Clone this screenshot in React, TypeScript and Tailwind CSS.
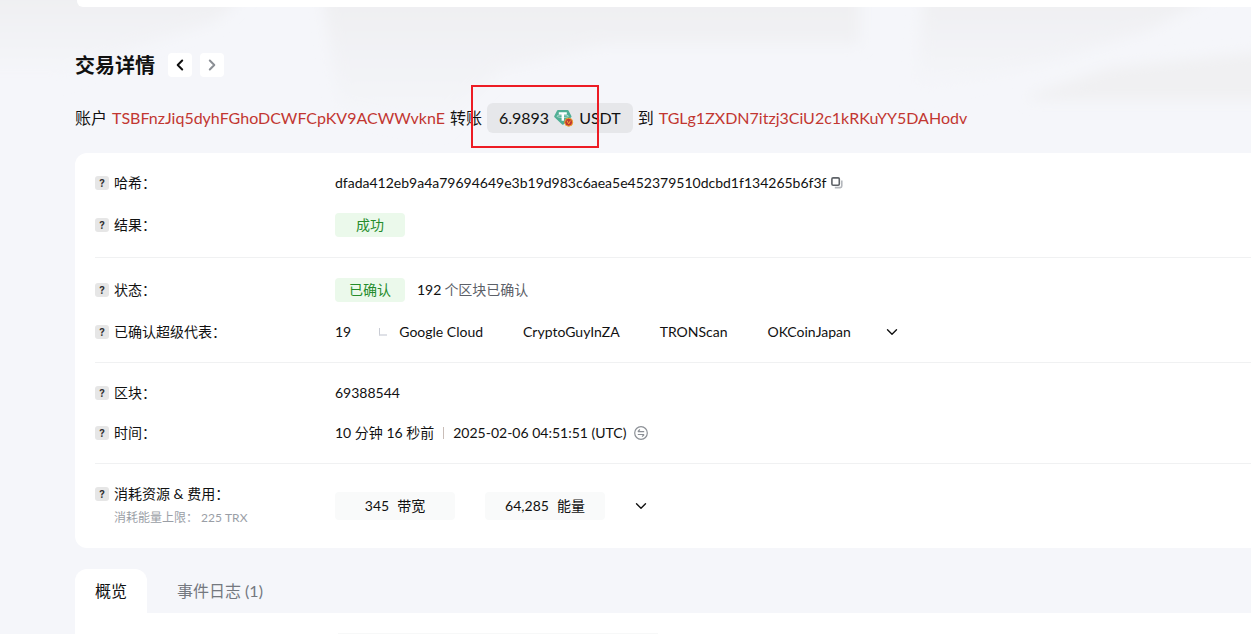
import type { ReactNode } from 'react';

const representatives = ['Google Cloud', 'CryptoGuyInZA', 'TRONScan', 'OKCoinJapan'];

function Chevron({ className = '' }: { className?: string }) {
  return (
    <svg viewBox="0 0 12 12" className={`h-3 w-3 shrink-0 fill-none stroke-current ${className}`} strokeWidth="1.4" strokeLinecap="round" strokeLinejoin="round">
      <path d="M1.5 3.8 6 8.3l4.5-4.5" />
    </svg>
  );
}

function CopyIcon() {
  return (
    <svg viewBox="0 0 12 12" className="h-3 w-3 fill-none" strokeWidth="1.6">
      <path d="M3.8 10.6h5.4a1.6 1.6 0 0 0 1.6-1.6V3.6" stroke="#b4b7bc" />
      <rect x=".9" y=".9" width="7.4" height="7.4" rx="1.2" stroke="#5f6368" />
    </svg>
  );
}

function SwapIcon() {
  return (
    <svg viewBox="0 0 14 14" className="h-3.5 w-3.5 fill-none" stroke="#8c9096" strokeWidth="1.2">
      <circle cx="7" cy="7" r="6.3" />
      <path d="M10.2 5.6H4M5.9 3.5 3.8 5.6M3.8 8.5H10M8.1 10.6l2.1-2.1" />
    </svg>
  );
}

function TetherIcon() {
  return (
    <svg viewBox="0 0 20 18" className="h-[18px] w-5 shrink-0">
      <path d="M4 1h9.6a1 1 0 0 1 .9.5L17.4 7a1 1 0 0 1-.2 1.2l-7.7 7.3a1 1 0 0 1-1.4 0L.5 8.2A1 1 0 0 1 .3 7l2.8-5.5A1 1 0 0 1 4 1z" fill="#50af95" />
      <path d="M4.8 3.2h8v2.2H10v6.3H7.600V5.400H4.800z" fill="#fff" />
      <ellipse cx="8.800" cy="7.200" rx="5.800" ry="1.300" fill="none" stroke="#fff" strokeWidth=".5" />
      <circle cx="14.700" cy="13.200" r="4" fill="#c23631" stroke="#f0a92e" strokeWidth="1" />
      <path d="m13 11.700 1.700 3.200 1.700-3.200" fill="none" stroke="#f0a92e" strokeWidth="1" />
    </svg>
  );
}

function Backdrop() {
  return (
    <svg aria-hidden="true" viewBox="0 0 1251 153" preserveAspectRatio="none" className="absolute inset-x-0 top-0 -z-10 h-[153px] w-full">
      <defs>
        <linearGradient id="fade" x1="0" y1="0" x2="0" y2="1">
          <stop offset="0" stopColor="#eeeef0" />
          <stop offset="1" stopColor="#f5f6fa" />
        </linearGradient>
        <filter id="soft">
          <feGaussianBlur stdDeviation="7" />
        </filter>
      </defs>
      <g fill="url(#fade)" filter="url(#soft)">
        <path d="M-20-20H260L215 22 130 50 60 80H-20z" />
        <path d="M320-20H860V45H600L500 70 440 130 340 110z" />
        <path d="M925-20H1240L1150 30 1050 62 915 95z" />
        <path d="M1030 95 1110 68 1280 50V100H1030z" fill="#f0f0f2" />
      </g>
    </svg>
  );
}

function Row({ label, note, height = 'h-5', children }: { label: string; note?: string; height?: string; children: ReactNode }) {
  return (
    <div className={`flex items-center ${height}`}>
      <dt className="w-60 shrink-0">
        <div className="flex h-5 items-center gap-[5px]">
          <button aria-label={`${label}说明`} className="flex h-3.5 w-3.5 items-center justify-center rounded-[3px] bg-[#e6e6e6] font-['Inter'] text-[10px] leading-none font-bold text-[#333]">
            ?
          </button>
          <span>{label}：</span>
        </div>
        {note && <div className="mt-1 pl-[19px] text-xs leading-5 text-[#9a9ea6]">{note}</div>}
      </dt>
      <dd className="flex items-center whitespace-nowrap">{children}</dd>
    </div>
  );
}

function Section({ children }: { children: ReactNode }) {
  return <dl className="flex flex-col gap-5 border-b border-[#f0f1f2] py-5 last:border-b-0">{children}</dl>;
}

function Badge({ children }: { children: ReactNode }) {
  return <span className="flex h-6 w-[70px] items-center justify-center rounded bg-[#ebf9eb] text-[#258c2b]">{children}</span>;
}

function Resource({ amount, unit }: { amount: string; unit: string }) {
  return (
    <span className="mr-[30px] flex h-7 w-[120px] items-center justify-center gap-2 rounded bg-[#f9fafa]">
      <span>{amount}</span>
      <span>{unit}</span>
    </span>
  );
}

export default function App() {
  return (
    <div className="relative isolate flex min-h-screen flex-col overflow-hidden bg-[#f5f6fa] pl-[75px] font-['Lato','Noto_Sans_CJK_SC',sans-serif] text-sm leading-5 text-[#111]">
      <Backdrop />
      <div className="ml-0.5 h-[7px] rounded-bl-md bg-white" />

      <header className="pt-[46px]">
        <div className="flex h-6 items-center">
          <h1 className="text-xl leading-6 font-bold">交易详情</h1>
          <button aria-label="上一笔" className="ml-[13px] flex h-6 w-6 items-center justify-center rounded bg-white">
            <Chevron className="rotate-90 stroke-2" />
          </button>
          <button aria-label="下一笔" className="ml-2 flex h-6 w-6 items-center justify-center rounded bg-white text-[#8c9096]">
            <Chevron className="-rotate-90 stroke-2" />
          </button>
        </div>

        <div className="mt-[26px] flex h-[30px] items-center gap-[5px] text-base whitespace-nowrap">
          <span>账户</span>
          <a href="#from" className="text-[#c23631]">TSBFnzJiq5dyhFGhoDCWFCpKV9ACWWvknE</a>
          <span>转账</span>
          <span className="relative flex h-[30px] items-center gap-[5px] rounded-md bg-[#e6e7ea] px-3">
            <span>6.9893</span>
            <TetherIcon />
            <span>USDT</span>
            <span className="absolute -top-[18px] -left-4 h-[63px] w-32 border-2 border-[#ed1c24]" />
          </span>
          <span>到</span>
          <a href="#to" className="text-[#c23631]">TGLg1ZXDN7itzj3CiU2c1kRKuYY5DAHodv</a>
        </div>
      </header>

      <main className="mt-5 flex grow flex-col">
        <div className="rounded-l-xl bg-white pl-5">
          <Section>
            <Row label="哈希">
              <span>dfada412eb9a4a79694649e3b19d983c6aea5e452379510dcbd1f134265b6f3f</span>
              <button aria-label="复制" className="ml-1">
                <CopyIcon />
              </button>
            </Row>
            <Row label="结果" height="h-6">
              <Badge>成功</Badge>
            </Row>
          </Section>

          <Section>
            <Row label="状态" height="h-6">
              <Badge>已确认</Badge>
              <span className="ml-3">192</span>
              <span className="ml-[3px] text-[#5c6068]">个区块已确认</span>
            </Row>
            <Row label="已确认超级代表">
              <span>19</span>
              <span className="ml-7 h-2 w-2 border-b-2 border-l border-b-[#dfe1e7] border-l-[#c9ccd4]" />
              <ul className="ml-3 flex gap-10">
                {representatives.map((name) => (
                  <li key={name}>
                    <a href="#representative">{name}</a>
                  </li>
                ))}
              </ul>
              <button aria-label="展开代表" className="ml-[35px]">
                <Chevron />
              </button>
            </Row>
          </Section>

          <Section>
            <Row label="区块">
              <a href="#block">69388544</a>
            </Row>
            <Row label="时间">
              <span>10 分钟 16 秒前</span>
              <span className="mx-[9px] h-3 w-px bg-[#c9bdb8]" />
              <span>2025-02-06 04:51:51 (UTC)</span>
              <button aria-label="切换时区" className="ml-2">
                <SwapIcon />
              </button>
            </Row>
          </Section>

          <Section>
            <Row label="消耗资源 & 费用" note="消耗能量上限： 225 TRX" height="h-11">
              <Resource amount="345" unit="带宽" />
              <Resource amount="64,285" unit="能量" />
              <button aria-label="展开费用">
                <Chevron />
              </button>
            </Row>
          </Section>
        </div>

        <div role="tablist" className="mt-[21px] flex h-11 text-base">
          <button role="tab" aria-selected="true" className="w-[72px] rounded-t-xl bg-white">
            概览
          </button>
          <button role="tab" aria-selected="false" className="ml-[30px] text-[#74787f]">
            事件日志 (1)
          </button>
        </div>
        <div role="tabpanel" className="grow bg-white pt-5 pl-[263px]">
          <div className="w-80 border-t border-[#f7f8f8]" />
        </div>
      </main>
    </div>
  );
}
